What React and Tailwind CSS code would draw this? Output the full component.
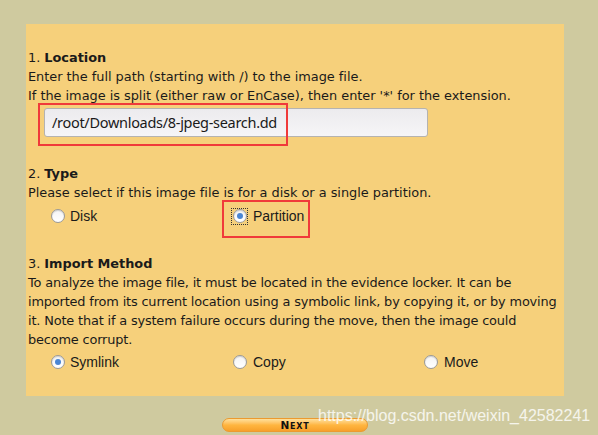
import React from "react";

function Radio({ checked, focus }) {
  return (
    <span className={`relative inline-flex items-center justify-center w-[15px] h-[15px] shrink-0 ${focus ? "outline outline-1 outline-dotted outline-[#333]" : ""}`}>
      <span className="w-[14px] h-[14px] rounded-full bg-gradient-to-b from-[#f4f4f4] to-white border border-[#9a9a9a] shadow-[inset_0_1px_1px_rgba(0,0,0,0.15)] flex items-center justify-center">
        {checked && <span className="w-[6px] h-[6px] rounded-full bg-[#4a86d4]" />}
      </span>
    </span>
  );
}

export default function App() {
  const txt = "font-['DejaVu_Sans',Verdana,sans-serif] text-[12.9px] tracking-[-0.02px] leading-[19px] text-[#1a1a1a]";
  const lbl = "font-['Liberation_Sans',Arial,sans-serif] text-[14px] tracking-normal text-[#1a1a1a]";
  return (
    <div className="w-[598px] h-[435px] bg-[#cfca9f] relative overflow-hidden">
      <div className="flex flex-col pt-[24px]">
        <div className={`ml-[26px] w-[538px] h-[372px] bg-[#f6d07b] pt-[24px] pl-[2px] ${txt}`}>
          <div>1. <b>Location</b></div>
          <div>Enter the full path (starting with /) to the image file.</div>
          <div>If the image is split (either raw or EnCase), then enter '*' for the extension.</div>
          <div className="relative h-[59px]">
            <div className="absolute left-[16px] top-[3px] w-[384px] h-[29px] rounded-[3px] border border-[#b5b3b0] bg-gradient-to-b from-[#ecebee] to-[#f6f5f7] flex items-center pl-[7px] font-['Noto_Sans',sans-serif] text-[14.5px] tracking-[-0.3px] text-[#1a1a1a]">
              /root/Downloads/8-jpeg-search.dd
            </div>
            <div className="absolute left-[10px] top-[-2px] w-[250px] h-[43px] border-2 border-[#f03a3a]" />
          </div>
          <div>2. <b>Type</b></div>
          <div>Please select if this image file is for a disk or a single partition.</div>
          <div className="relative h-[52px]">
            <div className="flex items-center h-[28px]">
              <div className="w-[204px] flex items-center pl-[22px] gap-[5px]">
                <Radio />
                <span className={lbl}>Disk</span>
              </div>
              <div className="flex items-center gap-[6px]">
                <Radio checked focus />
                <span className={lbl}>Partition</span>
              </div>
            </div>
            <div className="absolute left-[194px] top-[-2px] w-[88px] h-[38px] border-2 border-[#f03a3a]" />
          </div>
          <div>3. <b>Import Method</b></div>
          <div className="w-[536px] tracking-[-0.16px]">
            To analyze the image file, it must be located in the evidence locker. It can be imported from its current location using a symbolic link, by copying it, or by moving it. Note that if a system failure occurs during the move, then the image could become corrupt.
          </div>
          <div className="flex items-center h-[26px]">
            <div className="w-[204px] flex items-center pl-[22px] gap-[5px]">
              <Radio checked />
              <span className={lbl}>Symlink</span>
            </div>
            <div className="w-[191px] flex items-center gap-[6px]">
              <Radio />
              <span className={lbl}>Copy</span>
            </div>
            <div className="flex items-center gap-[6px]">
              <Radio />
              <span className={lbl}>Move</span>
            </div>
          </div>
        </div>
        <div className="flex mt-[22px] pl-[222px]">
          <div className="w-[146px] h-[14px] rounded-full bg-gradient-to-b from-[#ffe09a] via-[#ffb640] to-[#f7a02a] border border-[#eb9a30] flex items-center justify-center">
            <span className="font-['DejaVu_Sans',sans-serif] font-black text-[10.5px] leading-none text-[#111] tracking-[0.8px]">
              N<span className="text-[8px]">EXT</span>
            </span>
          </div>
        </div>
      </div>
      <div className="absolute left-[318px] top-[404px] font-['Liberation_Sans',Arial,sans-serif] text-[16px] text-white/80">
        https://blog.csdn.net/weixin_42582241
      </div>
    </div>
  );
}
